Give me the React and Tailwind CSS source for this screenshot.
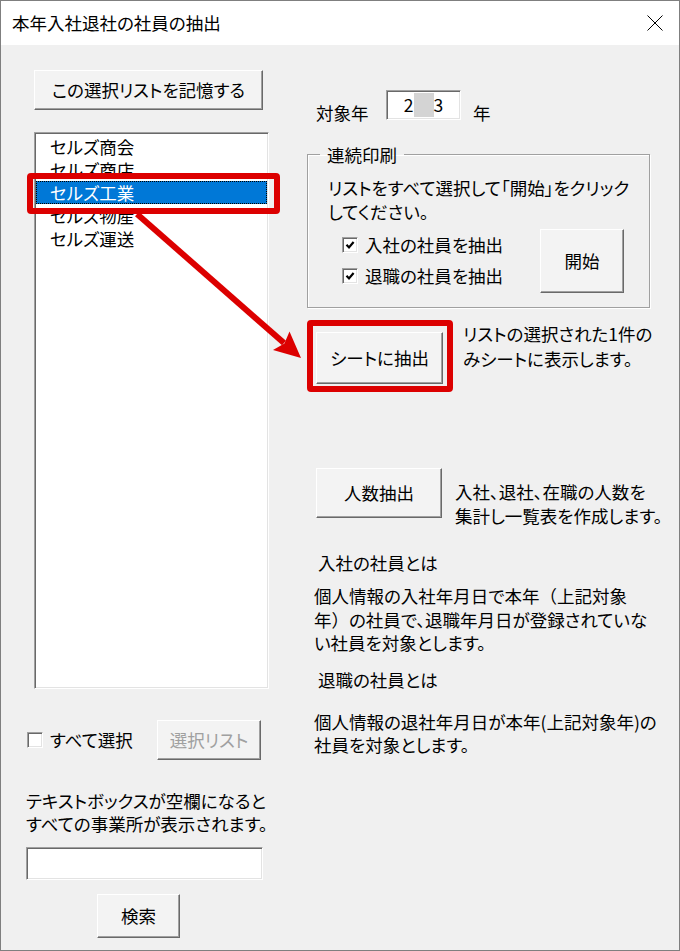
import React from 'react';

// Windows フォームの見た目を Tailwind で再現
const font = "font-['Noto_Sans_CJK_JP','Noto_Sans',sans-serif] [font-feature-settings:'palt']";
const sunken =
  'border border-t-[#a0a0a0] border-l-[#a0a0a0] border-r-white border-b-white shadow-[inset_1px_1px_0_#696969,inset_-1px_-1px_0_#e3e3e3]';

const Button = ({ className = '', disabled, children }) => (
  <button
    type="button"
    className={`flex items-center justify-center bg-[#f3f3f3] border border-t-white border-l-white border-r-[#696969] border-b-[#696969] shadow-[inset_-1px_-1px_0_#a0a0a0] ${
      disabled ? 'text-[#a0a0a0]' : 'text-black'
    } ${className}`}
  >
    {children}
  </button>
);

const CheckBox = ({ checked }) => (
  <span className={`flex w-[16px] h-[16px] min-w-[16px] shrink-0 items-center justify-center bg-white ${sunken}`}>
    {checked && (
      <svg width="10" height="10" viewBox="0 0 10 10">
        <path d="M1.5 4.8 L4 7.4 L8.6 2" stroke="#000" strokeWidth="2.2" fill="none" />
      </svg>
    )}
  </span>
);

// 全角カッコは詰めない
const Wide = ({ children }) => <span className="[font-feature-settings:normal]">{children}</span>;

const items = ['セルズ商会', 'セルズ商店', 'セルズ工業', 'セルズ物産', 'セルズ運送'];

export default function App() {
  return (
    <div
      className={`relative w-[680px] h-[951px] bg-[#f0f0f0] border border-[#7f7f7f] text-[17.5px] leading-[23.5px] text-black overflow-hidden ${font}`}
    >
      {/* タイトルバー */}
      <div className="h-[44px] bg-white flex items-center justify-between pl-[11px] pr-[16px]">
        <span>本年入社退社の社員の抽出</span>
        <svg width="16" height="16" viewBox="0 0 16 16">
          <path d="M0.5 0.5 L15.5 15.5 M15.5 0.5 L0.5 15.5" stroke="#000" strokeWidth="1" />
        </svg>
      </div>

      <div className="flex">
        {/* 左側 */}
        <div className="w-[305px] shrink-0 flex flex-col pt-[25px]">
          <Button className="ml-[33px] w-[229px] h-[40px]">この選択リストを記憶する</Button>

          <div className={`ml-[33px] mt-[22px] w-[235px] h-[557px] bg-white px-[1px] pt-[2px] ${sunken}`}>
            {items.map((name, i) => (
              <div
                key={name}
                className={`h-[23px] leading-[23px] pl-[14px] ${
                  i === 2 ? 'bg-[#0078d7] text-white outline-1 outline-dotted outline-black -outline-offset-1' : ''
                }`}
              >
                {name}
              </div>
            ))}
          </div>

          <div className="mt-[31px] flex items-center pl-[26px]">
            <div className="w-[130px] flex items-center">
              <CheckBox />
              <span className="ml-[7px]">すべて選択</span>
            </div>
            <Button disabled className="w-[104px] h-[40px]">選択リスト</Button>
          </div>

          <p className="mt-[29px] pl-[25px] leading-[23px]">
            テキストボックスが空欄になると
            <br />
            すべての事業所が表示されます。
          </p>

          <div className={`ml-[25px] mt-[12px] w-[237px] h-[33px] bg-white ${sunken}`} />

          <Button className="ml-[96px] mt-[14px] w-[83px] h-[44px]">検索</Button>
        </div>

        {/* 右側 */}
        <div className="flex-1 flex flex-col pt-[45px]">
          <div className="flex items-start">
            <span className="ml-[10px] mt-[11px] w-[70px]">対象年</span>
            <div className={`w-[75px] h-[30px] bg-white flex items-center justify-center ${sunken}`}>
              <span>2</span>
              <span className="inline-block w-[20px] h-[24px] bg-[#d4d4d4]" />
              <span>3</span>
            </div>
            <span className="ml-[12px] mt-[11px]">年</span>
          </div>

          <fieldset className="mt-[18px] ml-[1px] w-[343px] border border-[#a0a0a0] shadow-[inset_1px_1px_0_#fff,1px_1px_0_#fff] pl-[12px] pb-[14px]">
            <legend className="px-[7px]">連続印刷</legend>
            <div className="pl-[8px] pt-[10px]">
              <p>
                リストをすべて選択して「開始」をクリック
                <br />
                してください。
              </p>
              <div className="mt-[6px] flex">
                <div className="w-[212px] pl-[14px] flex flex-col">
                  <div className="h-[31px] flex items-center">
                    <CheckBox checked />
                    <span className="ml-[7px]">入社の社員を抽出</span>
                  </div>
                  <div className="h-[31px] flex items-center">
                    <CheckBox checked />
                    <span className="ml-[7px]">退職の社員を抽出</span>
                  </div>
                </div>
                <Button className="w-[84px] h-[64px]">開始</Button>
              </div>
            </div>
          </fieldset>

          <div className="flex items-start">
            <Button className="ml-[10px] mt-[24px] w-[127px] h-[52px]">シートに抽出</Button>
            <p className="ml-[20px] mt-[13px] leading-[25px]">
              リストの選択された1件の
              <br />
              みシートに表示します。
            </p>
          </div>

          <div className="mt-[84px] flex items-start">
            <Button className="ml-[10px] w-[126px] h-[50px]">人数抽出</Button>
            <p className="ml-[13px] mt-[12px] leading-[24px] whitespace-nowrap">
              入社、退社、在職の人数を
              <br />
              集計し一覧表を作成します。
            </p>
          </div>

          <p className="mt-[23px] ml-[12px] leading-[24px]">入社の社員とは</p>
          <p className="mt-[9px] ml-[8px] whitespace-nowrap">
            個人情報の入社年月日で本年<Wide>（</Wide>上記対象
            <br />
            年<Wide>）</Wide>の社員で、退職年月日が登録されていな
            <br />
            い社員を対象とします。
          </p>

          <p className="mt-[13px] ml-[12px] leading-[24px]">退職の社員とは</p>
          <p className="mt-[18px] ml-[8px] whitespace-nowrap">
            個人情報の退社年月日が本年(上記対象年)の
            <br />
            社員を対象とします。
          </p>
        </div>
      </div>

      {/* 赤い注釈 */}
      <div className="absolute left-[26px] top-[172px] w-[253px] h-[41px] border-[6px] border-[#dc0000] rounded-[4px] pointer-events-none" />
      <div className="absolute left-[306px] top-[319px] w-[146px] h-[72px] border-[6px] border-[#dc0000] rounded-[4px] pointer-events-none" />
      <svg className="absolute -left-px -top-px pointer-events-none" width="680" height="951" viewBox="0 0 680 951">
        <line x1="137" y1="214" x2="284" y2="343" stroke="#dc0000" strokeWidth="6" />
        <polygon points="301,358 273,350 284.4,343.5 289.5,331.5" fill="#dc0000" />
      </svg>
    </div>
  );
}
